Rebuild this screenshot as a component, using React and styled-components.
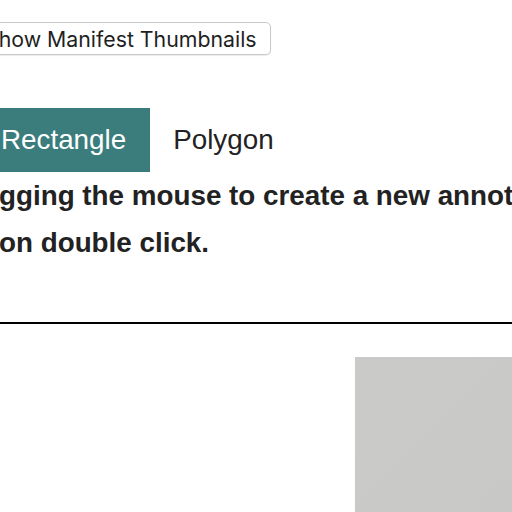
import React from 'react';
import styled, { createGlobalStyle } from 'styled-components';

const GlobalStyle = createGlobalStyle`
  html, body {
    margin: 0;
    padding: 0;
    background: #fff;
    overflow: hidden;
  }
  body {
    font-family: 'Liberation Sans', Arial, sans-serif;
    color: #222;
  }
`;

const Page = styled.div`
  width: 512px;
  height: 512px;
  overflow: hidden;
  display: flex;
  flex-direction: column;
  align-items: flex-start;

  & > * {
    flex-shrink: 0;
  }
`;

const ThumbButton = styled.button`
  margin: 22px 0 0 -29px;
  height: 33px;
  padding: 0 13px;
  border: 1px solid #c9c9c9;
  border-radius: 5px;
  background: #fff;
  box-shadow: 0 1px 1px rgba(0, 0, 0, 0.08);
  font-family: Inter, 'Liberation Sans', sans-serif;
  font-size: 21.3px;
  color: #1f1f1f;
  white-space: nowrap;
  cursor: pointer;
`;

const ToolBar = styled.div`
  display: flex;
  margin: 53px 0 0 -22px;
`;

const ToolButton = styled.button`
  height: 64px;
  padding: 0 24px 0 23px;
  border: none;
  background: ${(p) => (p.$active ? '#3a7d7c' : 'transparent')};
  color: ${(p) => (p.$active ? '#fff' : '#222')};
  font-family: 'Liberation Sans', Arial, sans-serif;
  font-size: 27.8px;
  white-space: nowrap;
  cursor: pointer;
`;

const Instructions = styled.div`
  font-size: 27.8px;
  font-weight: bold;
  line-height: 47px;
  color: #222;
  white-space: nowrap;
`;

const Line = styled.div`
  margin-left: ${(p) => p.$shift || 0}px;
`;

const Rule = styled.hr`
  align-self: stretch;
  margin: 56px 0 0;
  border: none;
  height: 2px;
  background: #000;
`;

const Gallery = styled.div`
  display: flex;
  padding: 33px 0 0 355px;
`;

const Canvas = styled.div`
  width: 300px;
  height: 300px;
  flex-shrink: 0;
  background: linear-gradient(135deg, #cacac8 0%, #c8c8c6 55%, #b9b9b5 100%);
`;

const App = () => {
  return (
    <Page>
      <GlobalStyle />
      <ThumbButton>Show Manifest Thumbnails</ThumbButton>
      <ToolBar>
        <ToolButton $active>Rectangle</ToolButton>
        <ToolButton>Polygon</ToolButton>
      </ToolBar>
      <Instructions>
        <Line $shift={-1}>gging the mouse to create a new annotation.</Line>
        <Line $shift={-1}>on double click.</Line>
      </Instructions>
      <Rule />
      <Gallery>
        <Canvas />
      </Gallery>
    </Page>
  );
};

export default App;
